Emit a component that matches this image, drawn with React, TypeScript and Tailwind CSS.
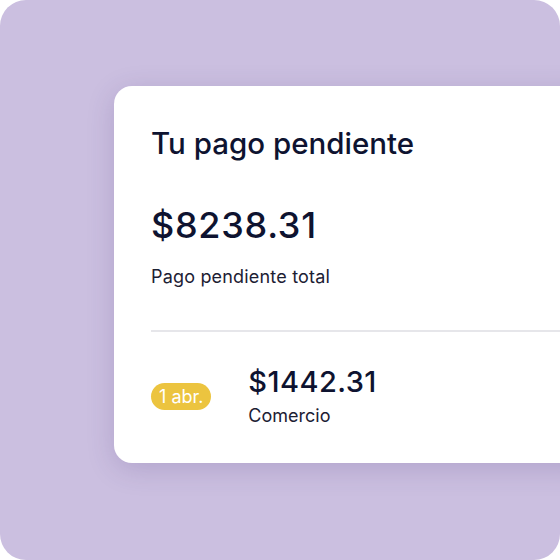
import type { FC } from "react";

const App: FC = () => {
  return (
    <div className="w-[560px] h-[560px] bg-white font-['Inter',sans-serif]">
      <div className="w-full h-full overflow-hidden rounded-[26px] bg-[#cbbfe0] pl-[114px] pt-[86px]">
        <div className="w-[480px] h-[377px] rounded-[18px] bg-white pl-[37px] pt-[39px] shadow-[0_6px_28px_rgba(60,40,110,0.18)]">
          <h2 className="text-[29.5px] leading-[36px] font-medium text-[#0e1330]">
            Tu pago pendiente
          </h2>
          <p className="mt-[42px] text-[36px] leading-[44px] tracking-[0.02em] font-medium text-[#0e1330]">
            $8238.31
          </p>
          <p className="mt-[17px] text-[18px] leading-[26px] tracking-[0.01em] text-[#1c2033]">
            Pago pendiente total
          </p>
          <div className="mt-[40px] h-[2px] bg-[#e6e6ea]" />
          <div className="mt-[32px] flex items-center gap-[37px]">
            <span className="rounded-full bg-[#ecc43f] px-[8px] py-[2px] text-[18px] leading-[23px] text-white">
              1 abr.
            </span>
            <div>
              <p className="text-[29px] leading-[36px] tracking-[0.015em] font-medium text-[#0e1330]">
                $1442.31
              </p>
              <p className="mt-[3px] text-[18px] leading-[26px] text-[#1c2033]">
                Comercio
              </p>
            </div>
          </div>
        </div>
      </div>
    </div>
  );
};

export default App;
